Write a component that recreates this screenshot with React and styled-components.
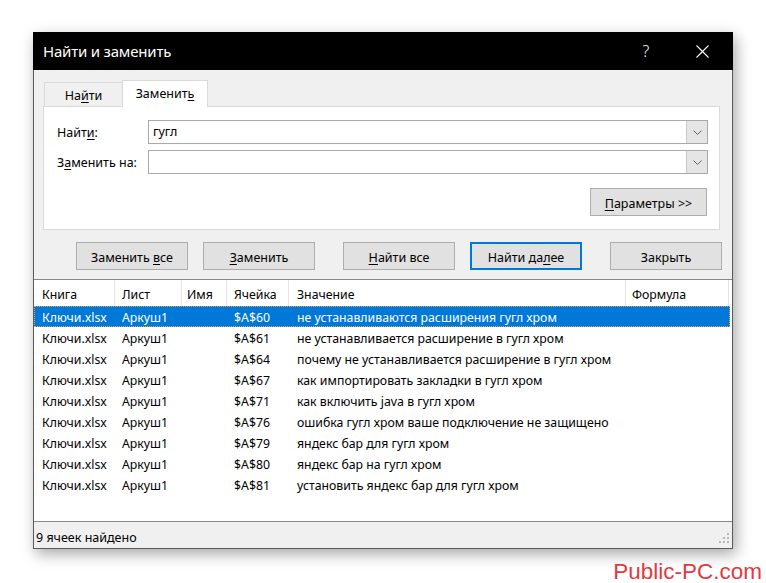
import styled, { createGlobalStyle } from "styled-components";

const GlobalStyle = createGlobalStyle`
  body {
    margin: 0;
    background: #fff;
    font-family: "Noto Sans", "Open Sans", sans-serif;
    color: #000;
  }
`

const Page = styled.div`
  width: 766px;
  height: 583px;
  padding: 32px 0 0 33px;
  box-sizing: border-box;
  overflow: hidden;
`

const Dialog = styled.div`
  width: 700px;
  height: 517px;
  box-sizing: border-box;
  border: 1px solid #5a5a5a;
  border-top: none;
  background: #f0f0f0;
  display: flex;
  flex-direction: column;
  box-shadow: 3px 5px 14px rgba(0, 0, 0, 0.35);
`

const TitleBar = styled.div`
  height: 38px;
  background: #000;
  color: #fff;
  display: flex;
  align-items: center;
  padding: 0 3px 0 10px;
  font-size: 15px;
  margin: 0 -1px;
`

const Title = styled.div`
  flex: 1;
  letter-spacing: -0.2px;
`

const TitleButton = styled.div`
  width: 56px;
  height: 38px;
  display: flex;
  align-items: center;
  justify-content: center;
  font-size: 16px;
  font-weight: 300;
`

const Content = styled.div`
  padding: 9px 12px 0 9px;
`

const Tabs = styled.div`
  display: flex;
  align-items: flex-end;
  height: 27px;
  padding-left: 1px;
`

const Tab = styled.div`
  width: ${p => p.$w}px;
  height: ${p => (p.$active ? 27 : 24)}px;
  box-sizing: border-box;
  text-align: center;
  line-height: ${p => (p.$active ? 26 : 25)}px;
  font-size: 12.5px;
  background: ${p => (p.$active ? "#fff" : "#f0f0f0")};
  border: 1px solid #d9d9d9;
  border-bottom: none;
  border-right: ${p => (p.$active ? "1px solid #d9d9d9" : "none")};
  position: relative;
  top: ${p => (p.$active ? 1 : 0)}px;
`

const U = styled.span`
  text-decoration: underline;
  text-underline-offset: 2px;
`

const Panel = styled.div`
  height: 124px;
  box-sizing: border-box;
  background: #fff;
  border: 1px solid #d9d9d9;
  padding: 13px 11px 0 13px;
  display: flex;
  flex-direction: column;
`

const FieldRow = styled.div`
  display: flex;
  align-items: center;
  margin-bottom: 6px;
`

const Label = styled.div`
  width: 91px;
  font-size: 12.5px;
  padding-top: 1px;
`

const Combo = styled.div`
  flex: 1;
  height: 24px;
  box-sizing: border-box;
  border: 1px solid #a9a9a9;
  display: flex;
  background: #fff;
`

const ComboText = styled.div`
  flex: 1;
  padding-left: 4px;
  font-size: 12.5px;
  line-height: 22px;
`

const ComboArrow = styled.div`
  width: 20px;
  background: #e5e5e5;
  border-left: 1px solid #c8c8c8;
  display: flex;
  align-items: center;
  justify-content: center;
`

const PanelFooter = styled.div`
  display: flex;
  justify-content: flex-end;
  margin-top: 8px;
  padding-right: 1px;
`

const Button = styled.div`
  width: ${p => p.$w || 112}px;
  height: 28px;
  box-sizing: border-box;
  margin-left: ${p => p.$ml || 0}px;
  background: #e1e1e1;
  border: ${p => (p.$focus ? "2px solid #0078d7" : "1px solid #adadad")};
  text-align: center;
  line-height: ${p => (p.$focus ? 27 : 29)}px;
  font-size: 12.5px;
  white-space: pre;
  overflow: hidden;
`

const ButtonRow = styled.div`
  display: flex;
  margin: 12px 0 9px;
  padding-left: 42px;
`

const Table = styled.div`
  flex: 1;
  background: #fff;
  border-top: 1px solid #828790;
  border-bottom: 1px solid #828790;
  display: flex;
  flex-direction: column;
  font-size: 12.3px;
`

const cols = "81px 67px 45px 62px 337px 103px"

const HeaderRow = styled.div`
  display: grid;
  grid-template-columns: ${cols};
  height: 26px;
`

const HeaderCell = styled.div`
  display: flex;
  align-items: center;
  padding-left: ${p => p.$pl}px;
  border-right: 1px solid #e5e5e5;
  padding-top: 3px;
`

const Row = styled.div`
  display: grid;
  grid-template-columns: ${cols};
  height: 21px;
  box-sizing: border-box;
  background: ${p => (p.$selected ? "#0078d7" : "transparent")};
  color: ${p => (p.$selected ? "#fff" : "#000")};
  border: 1px dotted ${p => (p.$selected ? "#e8a55a" : "transparent")};
  margin-right: 2px;
`

const Cell = styled.div`
  display: flex;
  align-items: center;
  padding-left: ${p => p.$pl - 1}px;
  padding-top: 2px;
  white-space: nowrap;
`

const StatusBar = styled.div`
  height: 26px;
  display: flex;
  align-items: center;
  justify-content: space-between;
  padding: 5px 2px 0 2px;
  box-sizing: border-box;
  font-size: 12.5px;
`

const Watermark = styled.div`
  text-align: right;
  padding-right: 4px;
  margin-top: 11px;
  font-family: "Liberation Sans", Arial, sans-serif;
  font-size: 22.5px;
  line-height: 23px;
  color: #e2393f;
`

const pads = [8, 7, 5, 7, 8, 6]
const headers = ["Книга", "Лист", "Имя", "Ячейка", "Значение", "Формула"]

const rows = [
  ["$A$60", "не устанавливаются расширения гугл хром"],
  ["$A$61", "не устанавливается расширение в гугл хром"],
  ["$A$64", "почему не устанавливается расширение в гугл хром"],
  ["$A$67", "как импортировать закладки в гугл хром"],
  ["$A$71", "как включить java в гугл хром"],
  ["$A$76", "ошибка гугл хром ваше подключение не защищено"],
  ["$A$79", "яндекс бар для гугл хром"],
  ["$A$80", "яндекс бар на гугл хром"],
  ["$A$81", "установить яндекс бар для гугл хром"],
]

const Chevron = () => (
  <svg width="9" height="5" viewBox="0 0 9 5">
    <path d="M0.5 0.5 L4.5 4.5 L8.5 0.5" fill="none" stroke="#606060" strokeWidth="1" />
  </svg>
)

const CloseIcon = () => (
  <svg width="13" height="13" viewBox="0 0 13 13">
    <path d="M0.5 0.5 L12.5 12.5 M12.5 0.5 L0.5 12.5" stroke="#fff" strokeWidth="1.1" />
  </svg>
)

const Grip = () => (
  <svg width="12" height="12" viewBox="0 0 12 12">
    {[[9, 1], [9, 5], [5, 5], [9, 9], [5, 9], [1, 9]].map(([x, y], i) => (
      <rect key={i} x={x} y={y} width="2" height="2" fill="#b8b8b8" />
    ))}
  </svg>
)

const App = () => {
  return (
    <>
      <GlobalStyle />
      <Page>
        <Dialog>
          <TitleBar>
            <Title>Найти и заменить</Title>
            <TitleButton>?</TitleButton>
            <TitleButton><CloseIcon /></TitleButton>
          </TitleBar>
          <Content>
            <Tabs>
              <Tab $w={78}>На<U>й</U>ти</Tab>
              <Tab $w={86} $active>Заменит<U>ь</U></Tab>
            </Tabs>
            <Panel>
              <FieldRow>
                <Label>Найт<U>и</U>:</Label>
                <Combo>
                  <ComboText>гугл</ComboText>
                  <ComboArrow><Chevron /></ComboArrow>
                </Combo>
              </FieldRow>
              <FieldRow>
                <Label>З<U>а</U>менить на:</Label>
                <Combo>
                  <ComboText></ComboText>
                  <ComboArrow><Chevron /></ComboArrow>
                </Combo>
              </FieldRow>
              <PanelFooter>
                <Button $w={117}><U>П</U>араметры &gt;&gt;</Button>
              </PanelFooter>
            </Panel>
          </Content>
          <ButtonRow>
            <Button>Заменить <U>в</U>се</Button>
            <Button $ml={15}><U>З</U>аменить</Button>
            <Button $ml={28}><U>Н</U>айти все</Button>
            <Button $ml={15} $focus>Найти да<U>л</U>ее</Button>
            <Button $ml={28}>Закрыть</Button>
          </ButtonRow>
          <Table>
            <HeaderRow>
              {headers.map((h, i) => (
                <HeaderCell key={h} $pl={pads[i]}>{h}</HeaderCell>
              ))}
            </HeaderRow>
            {rows.map((r, i) => (
              <Row key={r[0]} $selected={i === 0}>
                <Cell $pl={pads[0]}>Ключи.xlsx</Cell>
                <Cell $pl={pads[1]}>Аркуш1</Cell>
                <Cell $pl={pads[2]}></Cell>
                <Cell $pl={pads[3]}>{r[0]}</Cell>
                <Cell $pl={pads[4]}>{r[1]}</Cell>
                <Cell $pl={pads[5]}></Cell>
              </Row>
            ))}
          </Table>
          <StatusBar>
            <span>9 ячеек найдено</span>
            <Grip />
          </StatusBar>
        </Dialog>
        <Watermark>Public-PC.com</Watermark>
      </Page>
    </>
  )
}

export default App
